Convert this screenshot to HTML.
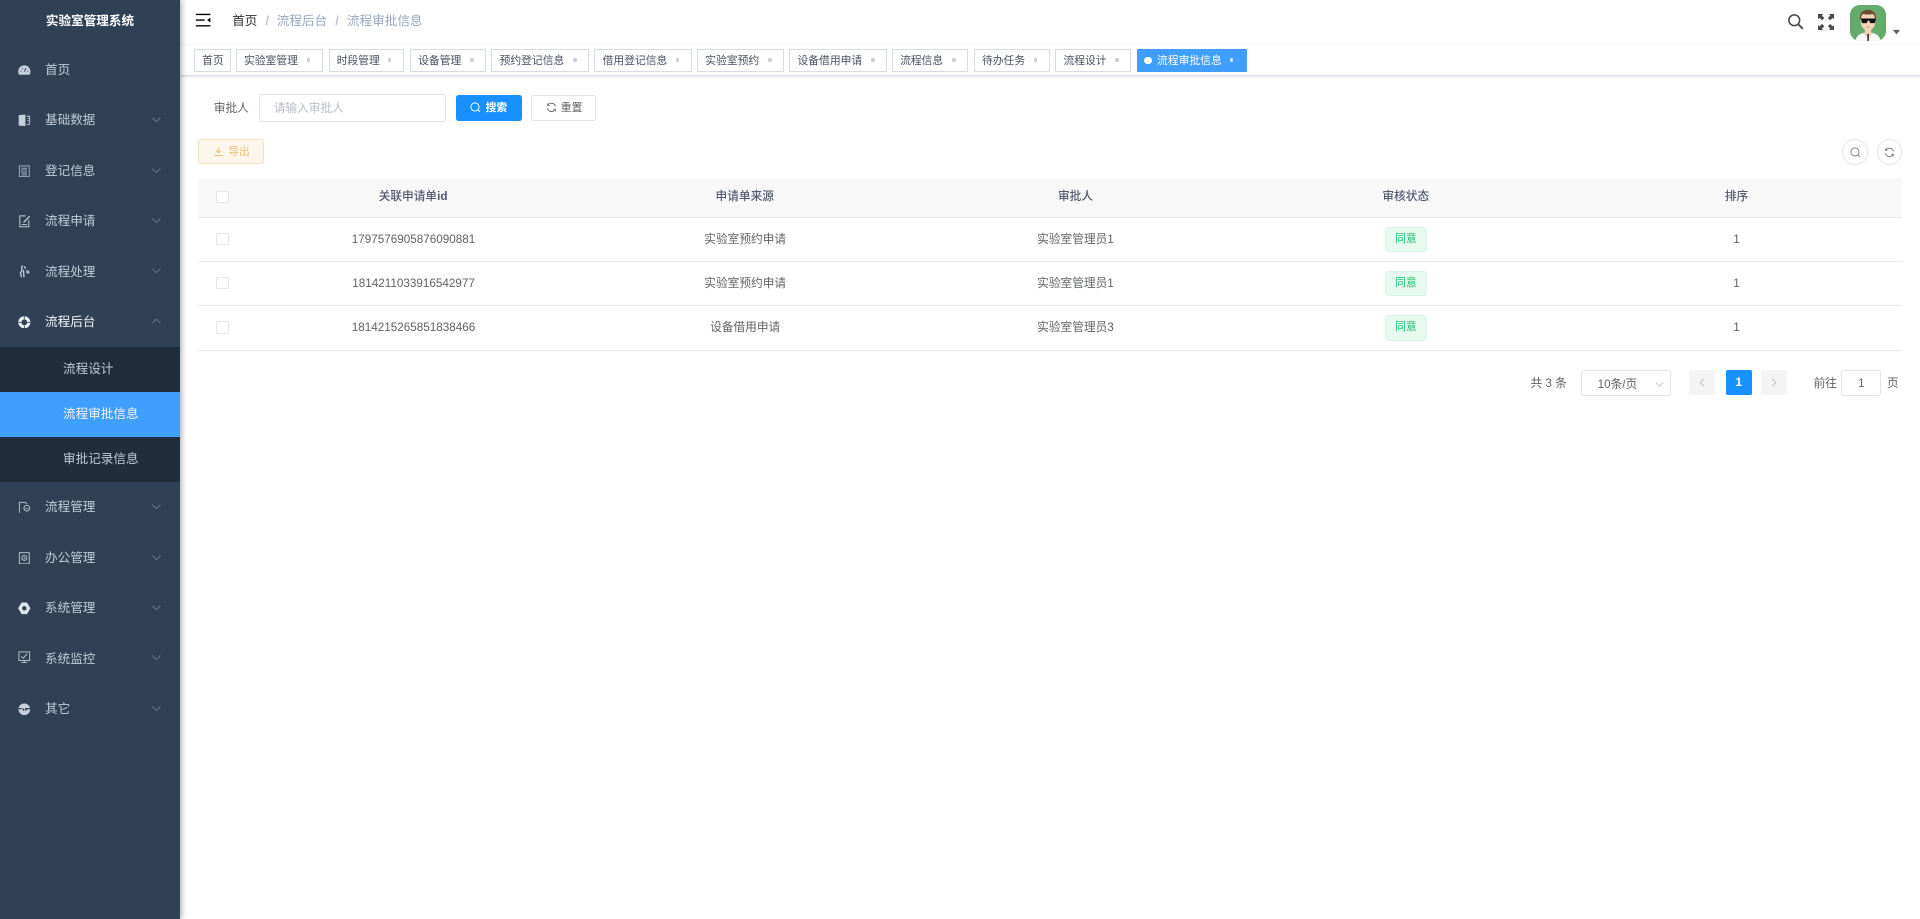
<!DOCTYPE html>
<html lang="zh-CN">
<head>
<meta charset="utf-8">
<title>流程审批信息</title>
<style>
html,body{margin:0;padding:0;width:1920px;height:919px;overflow:hidden;background:#fff}
#root{position:absolute;left:0;top:0;width:2133.33px;height:1021.2px;zoom:.9;overflow:hidden;background:#fff;font-family:"Liberation Sans","Noto Sans CJK SC",sans-serif;font-size:14px;color:#606266}
#root div,#root span{box-sizing:border-box}
.a{position:absolute}
#side{position:absolute;left:0;top:0;width:200px;height:100%;background:#304156;box-shadow:2px 0 6px rgba(0,21,41,.35);z-index:5}
.title{position:absolute;left:0;width:200px;top:0;height:50px;line-height:48px;text-align:center;color:#fff;font-weight:600;font-size:14px}
.mi{position:absolute;left:0;width:200px;height:56px;line-height:56px;color:#bfcbd9;font-size:14px}
.mi span{position:absolute;left:50px;top:0}
.mi svg.ic{position:absolute;left:20px;top:21px;width:14px;height:14px}
.mi svg.ch{position:absolute;left:168px;top:21px;width:12px;height:12px}
.sub{position:absolute;left:0;width:200px;height:50px;line-height:50px;background:#1f2d3d;color:#bfcbd9;font-size:14px;padding-left:70px}
.sub.on{background:#409eff;color:#f4f4f5}
.bc{position:absolute;top:0;height:50px;line-height:47px;font-size:14px;color:#97a8be}
.tag{position:absolute;top:54.5px;height:26px;line-height:25px;border:1px solid #d8dce5;background:#fff;color:#495060;font-size:12px;padding-left:8px;white-space:nowrap}
.tag i{position:absolute;right:13px;top:9px;width:4px;height:4px;border-radius:50%;background:#c8ccd4}
.tag.on{background:#409eff;border-color:#409eff;color:#fff;padding-left:21px}
.tag.on:before{content:"";position:absolute;left:7px;top:8px;width:8px;height:8px;border-radius:50%;background:#fff}
.tag.on i{background:#cfe5ff;right:14px}
.btn{position:absolute;height:28px;line-height:27px;font-size:12px;border:1px solid #dcdfe6;border-radius:3px;background:#fff;color:#606266;text-align:left;white-space:nowrap}
.btn svg{position:absolute;top:7px;left:15px;width:12px;height:12px}
.btn span{position:absolute;left:32px;top:0}
.th,.td{position:absolute;text-align:center;font-size:13px;width:367.6px;transform:translateX(-50%);white-space:nowrap}
.th{top:198px;height:43px;line-height:42px;color:#515a6e;font-weight:500}
.td{color:#606266}
.cb{position:absolute;left:240px;width:14px;height:14px;border:1px solid #e3e5ea;border-radius:2px;background:#fff}
.hl{position:absolute;left:220px;width:1893.3px;height:1px;background:#e6e8ec}
.st{position:absolute;left:1538.6px;width:47px;height:28px;line-height:26px;text-align:center;font-size:12px;color:#1cc06a;background:#e7faf0;border:1px solid #d9f5e6;border-radius:4px}
.pg{position:absolute;top:412px;height:28px;line-height:28px;font-size:13px;color:#606266;white-space:nowrap}
.pb{position:absolute;top:411px;width:29px;height:28px;background:#f4f4f5;border-radius:2px}
</style>
</head>
<body>
<div id="root">

<div id="side">
  <div class="title">实验室管理系统</div>

  <div class="mi" style="top:50px"><svg class="ic" viewBox="0 0 14 14"><path fill="#c6d0db" d="M7 1.500C3.100 1.500.2 4.500.2 8.400c0 1.500.4 2.600 1 3.600h11.600c.6-1 1-2.100 1-3.600C13.800 4.500 10.900 1.500 7 1.500z"/><path stroke="#304156" stroke-width="1" fill="none" d="M7 8.500 8.800 4.500M3 8h1M10 8h1M4.500 4.800l.7.7"/></svg><span>首页</span></div>

  <div class="mi" style="top:106px"><svg class="ic" viewBox="0 0 14 14"><path fill="#c6d0db" d="M.8 1.200 8.200.5v13l-7.400-.7z"/><path fill="none" stroke="#c6d0db" d="M9.500 2.500H13v9H9.500M10.500 5H12M10.500 7.500H12"/></svg><span>基础数据</span><svg class="ch" viewBox="0 0 12 12"><path d="M1.500 4 6 8.500 10.500 4" fill="none" stroke="#6d7d90" stroke-width="1"/></svg></div>

  <div class="mi" style="top:162px"><svg class="ic" viewBox="0 0 14 14"><rect x="1.500" y="1" width="11" height="12" fill="none" stroke="#a9b6c4"/><path stroke="#a9b6c4" d="M4 3.500h6M4 9h6M4 11h6"/><rect x="4" y="5" width="5" height="2.500" fill="none" stroke="#a9b6c4" stroke-width=".7"/></svg><span>登记信息</span><svg class="ch" viewBox="0 0 12 12"><path d="M1.500 4 6 8.500 10.500 4" fill="none" stroke="#6d7d90"/></svg></div>

  <div class="mi" style="top:218px"><svg class="ic" viewBox="0 0 14 14"><path fill="none" stroke="#bfcbd9" stroke-width="1.100" d="M8.500 1H2v12h10V6"/><path fill="#bfcbd9" d="M12.500.800l1 1-6 6.200-1.800.8.700-1.900z"/><path stroke="#bfcbd9" d="M4 10.500h6"/></svg><span>流程申请</span><svg class="ch" viewBox="0 0 12 12"><path d="M1.500 4 6 8.500 10.500 4" fill="none" stroke="#6d7d90"/></svg></div>

  <div class="mi" style="top:274px"><svg class="ic" viewBox="0 0 14 14"><path fill="none" stroke="#bfcbd9" stroke-width="1.500" d="M5.500 1c-1 0-1.300 1-1.300 2v3.500M4.200 6.500 2.800 8.500l1 5M6 5.500l.7 8M6.500 2c1 0 1.800.5 1.800 2M10 5.500v4M11.800 6.500v3"/></svg><span>流程处理</span><svg class="ch" viewBox="0 0 12 12"><path d="M1.500 4 6 8.500 10.500 4" fill="none" stroke="#6d7d90"/></svg></div>

  <div class="mi" style="top:330px;color:#f4f4f5"><svg class="ic" viewBox="0 0 14 14"><circle cx="7" cy="7" r="5" fill="none" stroke="#f0f3f6" stroke-width="3.400"/><path stroke="#304156" stroke-width="1" d="M7 .5v3M7 10.500v3M.5 7h3M10.500 7h3"/></svg><span>流程后台</span><svg class="ch" viewBox="0 0 12 12"><path d="M1.500 8 6 3.500 10.500 8" fill="none" stroke="#6d7d90"/></svg></div>

  <div class="sub" style="top:386px">流程设计</div>
  <div class="sub on" style="top:436px">流程审批信息</div>
  <div class="sub" style="top:486px">审批记录信息</div>

  <div class="mi" style="top:536px"><svg class="ic" viewBox="0 0 14 14"><path fill="none" stroke="#bfcbd9" stroke-width="1" d="M1.500 13V1.500h7L10 3.500"/><circle cx="9.800" cy="8" r="3.200" fill="none" stroke="#bfcbd9"/><path stroke="#bfcbd9" d="M8.500 8.500h2.500"/></svg><span>流程管理</span><svg class="ch" viewBox="0 0 12 12"><path d="M1.500 4 6 8.500 10.500 4" fill="none" stroke="#6d7d90"/></svg></div>

  <div class="mi" style="top:592px"><svg class="ic" viewBox="0 0 14 14"><rect x="1.500" y=".8" width="11" height="12.400" fill="none" stroke="#bfcbd9"/><circle cx="7" cy="6.500" r="2.800" fill="none" stroke="#bfcbd9"/><circle cx="7" cy="6.500" r="1" fill="#bfcbd9"/></svg><span>办公管理</span><svg class="ch" viewBox="0 0 12 12"><path d="M1.500 4 6 8.500 10.500 4" fill="none" stroke="#6d7d90"/></svg></div>

  <div class="mi" style="top:648px"><svg class="ic" viewBox="0 0 14 14"><path fill="#dfe5ec" d="M4 .5h6l3.800 6.500-3.800 6.500H4L.2 7z"/><circle cx="7" cy="7" r="2.400" fill="#304156"/></svg><span>系统管理</span><svg class="ch" viewBox="0 0 12 12"><path d="M1.500 4 6 8.500 10.500 4" fill="none" stroke="#6d7d90"/></svg></div>

  <div class="mi" style="top:704px"><svg class="ic" style="top:19px" viewBox="0 0 14 14"><rect x="1" y="1" width="12" height="9.500" fill="none" stroke="#bfcbd9"/><path fill="none" stroke="#bfcbd9" d="M3.500 6 6 8l4-5M7 10.500V13M3.500 13h7"/></svg><span>系统监控</span><svg class="ch" viewBox="0 0 12 12"><path d="M1.500 4 6 8.500 10.500 4" fill="none" stroke="#6d7d90"/></svg></div>

  <div class="mi" style="top:760px"><svg class="ic" viewBox="0 0 14 14"><circle cx="7" cy="7" r="6.500" fill="#c9d2dc"/><path fill="#304156" d="M.8 5.500h3l1 2 1-2 1.500 2 1-2h5.300v1.500H10l-1 2-1.500-2-1.200 2L5 7H.8z"/></svg><span>其它</span><svg class="ch" viewBox="0 0 12 12"><path d="M1.500 4 6 8.500 10.500 4" fill="none" stroke="#6d7d90"/></svg></div>
</div>

<!-- navbar -->
<div class="a" style="left:200px;top:0;width:1933.33px;height:50px;background:#fff;box-shadow:0 1px 4px rgba(0,21,41,.08)"></div>
<svg class="a" style="left:216.500px;top:13.500px;width:18px;height:18px" viewBox="0 0 20 20"><path d="M1 3h18M1 10h11M1 17h18" stroke="#000" stroke-width="1.700" fill="none"/><path d="M19 7v6l-4-3z" fill="#000"/></svg>
<div class="bc" style="left:258px;color:#303133">首页</div>
<div class="bc" style="left:295px;color:#c0c4cc;font-weight:700">/</div>
<div class="bc" style="left:307.500px">流程后台</div>
<div class="bc" style="left:372.500px;color:#c0c4cc;font-weight:700">/</div>
<div class="bc" style="left:385.500px">流程审批信息</div>

<svg class="a" style="left:1986px;top:14.500px;width:19px;height:19px" viewBox="0 0 20 20"><circle cx="8.500" cy="8.500" r="6.300" fill="none" stroke="#4a4a4a" stroke-width="1.800"/><path d="M13 13l5.500 5.500" stroke="#4a4a4a" stroke-width="2.200"/></svg>
<svg class="a" style="left:2020px;top:15px;width:18px;height:18px" viewBox="0 0 18 18"><g fill="#4a4a4a"><path d="M0 0h6L4.300 1.700 7 4.400 4.500 7 1.700 4.300 0 6z"/><path d="M18 0h-6l1.700 1.700L11 4.400 13.500 7l2.800-2.700L18 6z"/><path d="M0 18h6l-1.700-1.700L7 13.600 4.500 11l-2.800 2.700L0 12z"/><path d="M18 18h-6l1.700-1.700-2.700-2.700 2.500-2.600 2.800 2.700L18 12z"/></g></svg>

<svg class="a" style="left:2055px;top:5px;width:40px;height:40px" viewBox="0 0 40 40">
  <defs><clipPath id="av"><rect width="40" height="40" rx="11"/></clipPath></defs>
  <g clip-path="url(#av)">
    <rect width="40" height="40" fill="#64ab6c"/>
    <path d="M6 40c1-7 7-9.500 14-9.500S33 33 34 40z" fill="#f6f8f5"/>
    <path d="M14 31h12l-6 6z" fill="#f2d6bf"/>
    <rect x="19.300" y="31" width="1.600" height="9" fill="#1c1c1c"/>
    <ellipse cx="20" cy="17.500" rx="8.300" ry="11" fill="#f2d3b8"/>
    <rect x="16.500" y="25" width="7" height="7" fill="#f2d3b8"/>
    <path d="M11 16c-.8-7 3.500-11 9.500-10.500 5.500 0 9 4 8.400 10.500l-1.200-.500c0-3-1-5-2.700-5.500-3 .8-7 .8-10.500 0-1.500 1-2.300 3-2.300 5.500z" fill="#6e4a33"/>
    <path d="M11.500 15h17v2l-1 3.200h-5l-1.400-3h-1.200l-1.400 3h-5l-1-3.200z" fill="#111"/>
    <path d="M18 24.500h4" stroke="#b87c63" stroke-width=".8"/>
  </g>
</svg>
<svg class="a" style="left:2102.500px;top:32px;width:10px;height:7px" viewBox="0 0 10 7"><path d="M1 1h8L5 6z" fill="#5b5b5b"/></svg>

<!-- tags view -->
<div class="a" style="left:200px;top:50px;width:1933.33px;height:34px;background:#fff;border-bottom:1px solid #d8dce5;box-shadow:0 1px 3px rgba(0,0,0,.12),0 0 3px rgba(0,0,0,.04)"></div>
<div class="tag" style="left:215.5px;width:41px">首页</div>
<div class="tag" style="left:262px;width:97px">实验室管理<i></i></div>
<div class="tag" style="left:365px;width:84px">时段管理<i></i></div>
<div class="tag" style="left:455.5px;width:85px">设备管理<i></i></div>
<div class="tag" style="left:546px;width:109px">预约登记信息<i></i></div>
<div class="tag" style="left:660.500px;width:108.500px">借用登记信息<i></i></div>
<div class="tag" style="left:774.500px;width:97px">实验室预约<i></i></div>
<div class="tag" style="left:877px;width:109px">设备借用申请<i></i></div>
<div class="tag" style="left:991px;width:85px">流程信息<i></i></div>
<div class="tag" style="left:1082px;width:84.500px">待办任务<i></i></div>
<div class="tag" style="left:1172.500px;width:84.500px">流程设计<i></i></div>
<div class="tag on" style="left:1263.500px;width:122px">流程审批信息<i></i></div>

<!-- search form -->
<div class="a" style="left:237.500px;top:105px;height:30px;line-height:30px;font-size:13px;color:#606266">审批人</div>
<div class="a" style="left:288px;top:104.500px;width:208px;height:31px;line-height:31px;border:1px solid #e1e3e8;border-radius:4px;padding-left:15px;font-size:13px;color:#b8bcc4">请输入审批人</div>
<div class="btn" style="left:506.500px;top:105.500px;width:73px;height:29px;background:#1890ff;border-color:#1890ff;color:#fff;font-weight:700"><svg viewBox="0 0 12 12"><circle cx="5.500" cy="5.500" r="4.500" fill="none" stroke="#fff" stroke-width="1.100"/><path d="M8.800 8.800 11 11" stroke="#fff" stroke-width="1.100"/></svg><span>搜索</span></div>
<div class="btn" style="left:590px;top:105.500px;width:72px;height:29px;border-color:#e1e3e8"><svg viewBox="0 0 12 12"><path d="M10.500 5a4.700 4.700 0 0 0-8.500-1.500M1.500 7a4.700 4.700 0 0 0 8.500 1.500" fill="none" stroke="#606266" stroke-width="1"/><path d="M1.500 1.500v2.400h2.400M10.500 10.500V8.100H8.100" fill="none" stroke="#606266" stroke-width=".8"/></svg><span>重置</span></div>

<!-- toolbar -->
<div class="btn" style="left:220.500px;top:154.500px;width:72.500px;background:#fdf6ec;border-color:#f7e2bf;color:#edbd75"><svg viewBox="0 0 12 12"><path d="M6 1.500v6M3.500 5 6 7.500 8.500 5M1.500 10.500h9" fill="none" stroke="#edbd75" stroke-width="1.100"/></svg><span>导出</span></div>
<div class="a" style="left:2047px;top:154.500px;width:28.500px;height:28.500px;border:1px solid #e3e5ea;border-radius:50%"></div>
<svg class="a" style="left:2055px;top:163px;width:12px;height:12px" viewBox="0 0 12 12"><circle cx="5.500" cy="5.500" r="4.500" fill="none" stroke="#70747c"/><path d="M8.800 8.800 11 11" stroke="#70747c"/></svg>
<div class="a" style="left:2085.500px;top:154.500px;width:28px;height:28.500px;border:1px solid #e3e5ea;border-radius:50%"></div>
<svg class="a" style="left:2093.500px;top:163px;width:12px;height:12px" viewBox="0 0 12 12"><path d="M10.500 5a4.700 4.700 0 0 0-8.500-1.500M1.500 7a4.700 4.700 0 0 0 8.500 1.500" fill="none" stroke="#70747c"/><path d="M1.500 1.500v2.400h2.400M10.500 10.500V8.100H8.100" fill="none" stroke="#70747c" stroke-width=".8"/></svg>

<!-- table -->
<div class="a" style="left:220px;top:198px;width:1893.3px;height:43.500px;background:#f8f8f9"></div>
<div class="hl" style="top:241px"></div>
<div class="hl" style="top:290px"></div>
<div class="hl" style="top:339px"></div>
<div class="hl" style="top:388.500px"></div>

<div class="cb" style="top:212px"></div>
<div class="th" style="left:459px">关联申请单<b>id</b></div>
<div class="th" style="left:827.500px">申请单来源</div>
<div class="th" style="left:1195px">审批人</div>
<div class="th" style="left:1562px">审核状态</div>
<div class="th" style="left:1929.500px">排序</div>

<div class="cb" style="top:258.500px"></div>
<div class="td" style="left:459.500px;top:242.500px;height:48px;line-height:48px">1797576905876090881</div>
<div class="td" style="left:828px;top:242.500px;height:48px;line-height:48px">实验室预约申请</div>
<div class="td" style="left:1195px;top:242.500px;height:48px;line-height:48px">实验室管理员1</div>
<div class="st" style="top:252px">同意</div>
<div class="td" style="left:1929.500px;top:242.500px;height:48px;line-height:48px">1</div>

<div class="cb" style="top:307.500px"></div>
<div class="td" style="left:459.500px;top:291.500px;height:48px;line-height:48px">1814211033916542977</div>
<div class="td" style="left:828px;top:291.500px;height:48px;line-height:48px">实验室预约申请</div>
<div class="td" style="left:1195px;top:291.500px;height:48px;line-height:48px">实验室管理员1</div>
<div class="st" style="top:301px">同意</div>
<div class="td" style="left:1929.500px;top:291.500px;height:48px;line-height:48px">1</div>

<div class="cb" style="top:357px"></div>
<div class="td" style="left:459.500px;top:340px;height:49px;line-height:49px">1814215265851838466</div>
<div class="td" style="left:828px;top:340px;height:49px;line-height:49px">设备借用申请</div>
<div class="td" style="left:1195px;top:340px;height:49px;line-height:49px">实验室管理员3</div>
<div class="st" style="top:350.500px">同意</div>
<div class="td" style="left:1929.500px;top:340px;height:49px;line-height:49px">1</div>

<!-- pagination -->
<div class="pg" style="left:1700.500px">共 3 条</div>
<div class="a" style="left:1756.500px;top:411px;width:100px;height:29px;line-height:30px;border:1px solid #e1e3e8;border-radius:3px;font-size:13px;padding-left:17.500px;color:#606266">10条/页<svg class="a" style="left:81px;top:11px;width:10px;height:8px" viewBox="0 0 10 8"><path d="M1 1.500 5 6l4-4.500" fill="none" stroke="#c0c4cc"/></svg></div>
<div class="pb" style="left:1877px"><svg class="a" style="left:11px;top:9px;width:7px;height:10px" viewBox="0 0 7 10"><path d="M5.500 1 1.500 5l4 4" fill="none" stroke="#c0c4cc" stroke-width="1.200"/></svg></div>
<div class="pb" style="left:1917.500px;background:#1890ff;color:#fff;font-size:13px;font-weight:700;text-align:center;line-height:28px">1</div>
<div class="pb" style="left:1957px"><svg class="a" style="left:11px;top:9px;width:7px;height:10px" viewBox="0 0 7 10"><path d="M1.500 1l4 4-4 4" fill="none" stroke="#c0c4cc" stroke-width="1.200"/></svg></div>
<div class="pg" style="left:2015px">前往</div>
<div class="a" style="left:2046px;top:411px;width:44.500px;height:29px;line-height:28px;border:1px solid #e1e3e8;border-radius:3px;text-align:center;font-size:13px;color:#606266">1</div>
<div class="pg" style="left:2096.500px">页</div>

</div>
</body>
</html>
